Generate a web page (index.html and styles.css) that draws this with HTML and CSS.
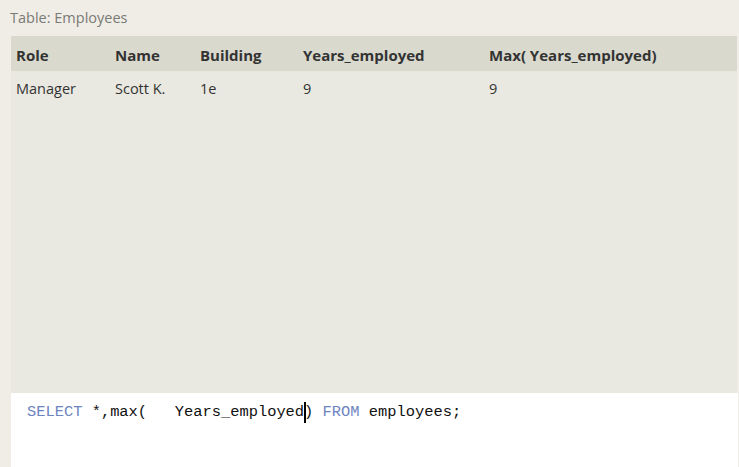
FILE: index.html
```html
<!DOCTYPE html>
<html>
<head>
<meta charset="utf-8">
<link rel="stylesheet" href="styles.css">
</head>
<body>
<div class="page">
  <div class="title">Table: Employees</div>
  <div class="results">
    <table class="grid">
      <colgroup>
        <col class="c1"><col class="c2"><col class="c3"><col class="c4"><col class="c5">
      </colgroup>
      <thead>
        <tr><th>Role</th><th>Name</th><th>Building</th><th>Years_employed</th><th>Max( Years_employed)</th></tr>
      </thead>
      <tbody>
        <tr><td>Manager</td><td>Scott K.</td><td>1e</td><td>9</td><td>9</td></tr>
      </tbody>
    </table>
  </div>
  <div class="editor"><pre class="code"><span class="kw">SELECT</span> *,max(   Years_employed<span class="cursor"></span>) <span class="kw">FROM</span> employees;</pre></div>
</div>
</body>
</html>
```
FILE: styles.css
```css
html, body {
  margin: 0;
  padding: 0;
  background: #efede6;
  height: 100%;
  overflow: hidden;
}
.page {
  display: flex;
  flex-direction: column;
  height: 467px;
  width: 739px;
  font-family: "Open Sans", "Noto Sans", sans-serif;
}
.title {
  height: 36px;
  padding-left: 10px;
  box-sizing: border-box;
  padding-top: 8px;
  font-size: 14.5px;
  line-height: 20px;
  color: #7a7a76;
}
.results {
  margin-left: 11px;
  width: 726px;
  height: 357px;
  background: #eae9e1;
  flex: none;
}
.grid {
  border-collapse: collapse;
  width: 100%;
  table-layout: fixed;
  font-size: 14.5px;
  color: #333;
}
.c1 { width: 99px; }
.c2 { width: 85px; }
.c3 { width: 103px; }
.c4 { width: 186px; }
.grid th {
  background: #dad9ce;
  height: 35px;
  padding: 2px 0 0 5px;
  text-align: left;
  font-weight: 700;
  font-size: 15px;
  color: #333;
  box-sizing: border-box;
}
.grid td {
  height: 34px;
  padding: 0 0 0 5px;
  text-align: left;
  box-sizing: border-box;
}
.editor {
  margin-left: 11px;
  width: 727px;
  flex: 1;
  background: #ffffff;
}
.code {
  margin: 0;
  padding: 9px 0 0 16px;
  font-family: "Liberation Mono", "DejaVu Sans Mono", monospace;
  font-size: 15.4px;
  line-height: 21px;
  color: #111;
}
.kw { color: #6d84bf; }
.cursor {
  display: inline-block;
  width: 0;
  height: 21px;
  border-left: 2px solid #000;
  margin-right: -2px;
  vertical-align: top;
}
```
